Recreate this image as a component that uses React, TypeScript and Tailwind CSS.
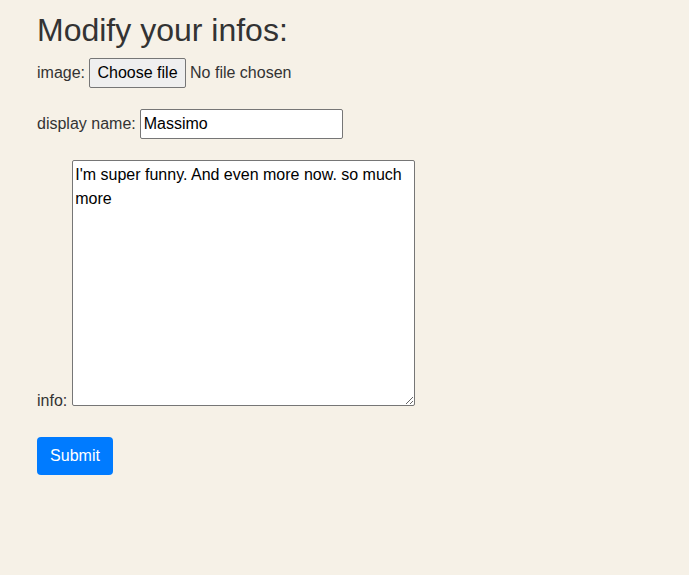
import React from "react";

export default function App() {
  return (
    <div className="min-h-screen bg-[#f6f1e7] pl-[37px] pt-[12px] font-['Liberation_Sans',Arial,sans-serif] text-[16px] text-[#333]">
      <h1 className="text-[32px] font-normal leading-[37px]">Modify your infos:</h1>
      <form onSubmit={(e) => e.preventDefault()}>
        <div className="mt-[9px] flex h-[30px] items-center">
          <span>image:</span>
          <button
            type="button"
            className="ml-[4px] flex h-[30px] w-[97px] items-center justify-center rounded-[2px] border border-[#767676] bg-[#efefef] text-black"
          >
            Choose file
          </button>
          <span className="ml-[4px]">No file chosen</span>
        </div>
        <div className="mt-[21px] flex h-[30px] items-center">
          <label htmlFor="dn">display name:</label>
          <input
            id="dn"
            className="ml-[4px] h-[30px] w-[203px] rounded-[2px] border border-[#767676] bg-white px-[3px] text-black outline-none"
            defaultValue="Massimo"
          />
        </div>
        <div className="mt-[21px] flex items-end">
          <label htmlFor="info" className="mb-[-4px] mr-[5px] leading-[18px]">
            info:
          </label>
          <textarea
            id="info"
            className="h-[246px] w-[343px] resize rounded-[2px] border border-[#767676] bg-white p-[2px] leading-[24px] text-black outline-none"
            defaultValue="I'm super funny. And even more now. so much more"
          />
        </div>
        <button
          type="submit"
          className="mt-[31px] block h-[38px] w-[76px] rounded-[4px] bg-[#007bff] text-white leading-[24px]"
        >
          Submit
        </button>
      </form>
    </div>
  );
}
